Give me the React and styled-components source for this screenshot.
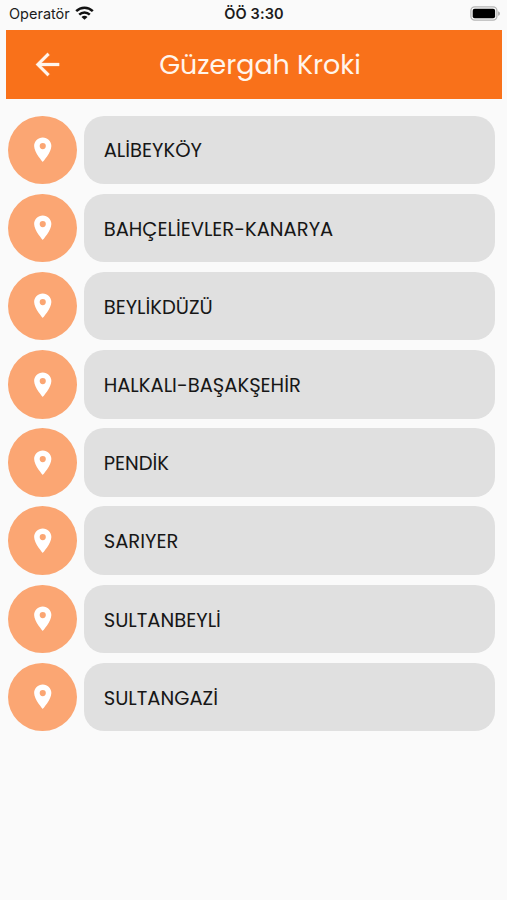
import React from "react";
import styled, { createGlobalStyle } from "styled-components";

const GlobalStyle = createGlobalStyle`
  * { box-sizing: border-box; }
  html, body { margin: 0; padding: 0; background: #fafafa; }
`;

const Screen = styled.div`
  width: 507px;
  height: 900px;
  overflow: hidden;
  background: #fafafa;
  font-family: Poppins, Inter, "Open Sans", sans-serif;
`;

const StatusBar = styled.div`
  height: 30px;
  padding: 0 6px 3px 9px;
  display: grid;
  grid-template-columns: 1fr auto 1fr;
  align-items: center;
  color: #1c1c1c;
  font-family: Inter, sans-serif;
`;

const Carrier = styled.div`
  display: flex;
  align-items: center;
  gap: 5px;
  font-size: 14.5px;
  line-height: 20px;
`;

const Clock = styled.div`
  margin-left: -2px;
  font-size: 14.5px;
  line-height: 20px;
  font-weight: 600;
  letter-spacing: 0.1px;
`;

const BatterySlot = styled.div`
  display: flex;
  justify-content: flex-end;
`;

const Header = styled.header`
  height: 68.5px;
  margin: 0 5px 0 6px;
  padding-left: 24px;
  display: grid;
  grid-template-columns: 35px 1fr 47px;
  align-items: center;
  background: #f9711a;
  color: #fff5ec;
`;

const BackButton = styled.button`
  display: flex;
  padding: 0;
  border: 0;
  background: none;
  color: inherit;
`;

const Title = styled.h1`
  margin: 0;
  padding-top: 1px;
  text-align: center;
  font-size: 26.9px;
  line-height: 36px;
  font-weight: 400;
  white-space: nowrap;
`;

const RouteList = styled.main`
  display: flex;
  flex-direction: column;
  gap: 9.7px;
  padding: 17px 12.5px 0 8px;
`;

const RouteRow = styled.div`
  display: flex;
  gap: 7px;
  height: 68.5px;
`;

const PinBadge = styled.div`
  flex: none;
  width: 69px;
  height: 68.5px;
  border-radius: 50%;
  display: flex;
  align-items: center;
  justify-content: center;
  background: #fba673;
  color: #fff;
`;

const RouteCard = styled.div`
  flex: 1;
  display: flex;
  align-items: center;
  padding: 1.4px 0 0 19.7px;
  border-radius: 20px;
  background: #e0e0e0;
`;

const RouteName = styled.span`
  color: #171717;
  font-size: 19.55px;
  line-height: 28px;
  white-space: nowrap;
`;

const routes = [
  "ALİBEYKÖY",
  "BAHÇELİEVLER-KANARYA",
  "BEYLİKDÜZÜ",
  "HALKALI-BAŞAKŞEHİR",
  "PENDİK",
  "SARIYER",
  "SULTANBEYLİ",
  "SULTANGAZİ",
];

const WifiIcon = () => (
  <svg width="19" height="15" viewBox="0 0 19 15" fill="none" stroke="#111" strokeWidth="2.5">
    <path d="M1.2 5.2C5.9 0.6 13.1 0.6 17.8 5.2" />
    <path d="M4.2 8.6C7.2 5.7 11.8 5.7 14.8 8.6" />
    <path d="M9.5 13.8L6.5 10.9C8.2 9.4 10.8 9.4 12.5 10.9Z" fill="#111" stroke="none" />
  </svg>
);

const BatteryIcon = () => (
  <svg width="31" height="15" viewBox="0 0 31 15">
    <rect x="0.9" y="0.9" width="26" height="13.2" rx="3.8" fill="#fafafa" stroke="#b5b5b5" strokeWidth="1.3" />
    <rect x="2.7" y="2.7" width="22.4" height="9.6" rx="2" fill="#000" />
    <path d="M28.2 5.2C30.4 6 30.4 9 28.2 9.8Z" fill="#a5a5a5" />
  </svg>
);

const BackIcon = () => (
  <svg width="35" height="35" viewBox="0 0 24 24" fill="currentColor" stroke="currentColor" strokeWidth="0.2">
    <path d="M20 11H7.83l5.59-5.59L12 4l-8 8 8 8 1.41-1.41L7.83 13H20v-2z" />
  </svg>
);

const PinIcon = () => (
  <svg width="29.5" height="29.5" viewBox="0 0 24 24" fill="currentColor">
    <path d="M12 2C8.13 2 5 5.13 5 9c0 5.25 7 13 7 13s7-7.75 7-13c0-3.87-3.13-7-7-7zm0 9.5a2.5 2.5 0 0 1 0-5 2.5 2.5 0 0 1 0 5z" />
  </svg>
);

export default function App() {
  return (
    <Screen>
      <GlobalStyle />
      <StatusBar>
        <Carrier>
          Operatör
          <WifiIcon />
        </Carrier>
        <Clock>ÖÖ 3:30</Clock>
        <BatterySlot>
          <BatteryIcon />
        </BatterySlot>
      </StatusBar>
      <Header>
        <BackButton aria-label="Geri">
          <BackIcon />
        </BackButton>
        <Title>Güzergah Kroki</Title>
      </Header>
      <RouteList>
        {routes.map((name) => (
          <RouteRow key={name}>
            <PinBadge>
              <PinIcon />
            </PinBadge>
            <RouteCard>
              <RouteName>{name}</RouteName>
            </RouteCard>
          </RouteRow>
        ))}
      </RouteList>
    </Screen>
  );
}
